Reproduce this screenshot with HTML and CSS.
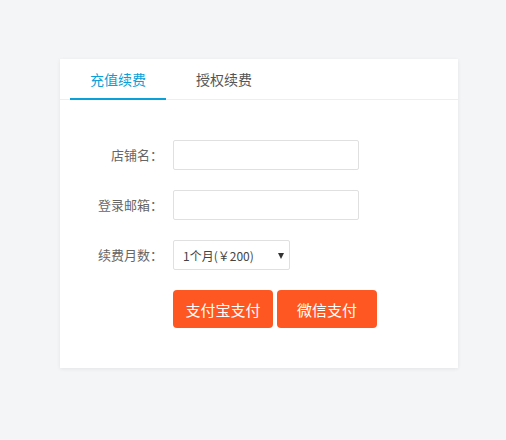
FILE: index.html
```html
<!DOCTYPE html>
<html lang="zh-CN">

<head>
    <meta charset="UTF-8">
    <meta name="viewport" content="width=device-width, initial-scale=1.0">
    <title>续费</title>
    <link rel="stylesheet" href="styles.css">
</head>

<body>
    <div class="card">
        <ul class="tabs">
            <li class="tab active">充值续费</li>
            <li class="tab">授权续费</li>
        </ul>
        <form class="form">
            <div class="row">
                <label class="label">店铺名：</label>
                <input class="input" type="text">
            </div>
            <div class="row">
                <label class="label">登录邮箱：</label>
                <input class="input" type="text">
            </div>
            <div class="row">
                <label class="label">续费月数：</label>
                <div class="select-wrap">
                    <select class="select">
                        <option>1个月(￥200)</option>
                        <option>3个月(￥600)</option>
                        <option>12个月(￥2400)</option>
                    </select>
                </div>
            </div>
            <div class="row actions">
                <button type="button" class="btn">支付宝支付</button>
                <button type="button" class="btn">微信支付</button>
            </div>
        </form>
    </div>
</body>

</html>
```

FILE: styles.css
```css
body {
    margin: 0;
    padding: 59px 48px 40px 60px;
    background-color: #f4f5f7;
    font-family: "Noto Sans CJK SC", "Open Sans", sans-serif;
    color: #666;
}

.card {
    width: 398px;
    background-color: #fff;
    box-shadow: 0 1px 4px rgba(0, 0, 0, 0.07);
}

.tabs {
    display: flex;
    margin: 0;
    padding: 0 0 0 10px;
    list-style: none;
    height: 40px;
    border-bottom: 1px solid #eee;
}

.tab {
    padding: 0 20px;
    margin-right: 10px;
    line-height: 40px;
    font-size: 14px;
    color: #555;
    cursor: pointer;
    position: relative;
}

.tab.active {
    color: #0aa0d8;
}

.tab.active::after {
    content: "";
    position: absolute;
    left: 0;
    right: 0;
    bottom: -1px;
    height: 2px;
    background-color: #0aa0d8;
}

.form {
    padding: 40px 0 40px 23px;
}

.row {
    display: flex;
    margin-bottom: 20px;
}

.row:last-child {
    margin-bottom: 0;
}

.label {
    width: 80px;
    padding-right: 10px;
    text-align: right;
    line-height: 30px;
    font-size: 13px;
    color: #666;
}

.input {
    width: 186px;
    height: 30px;
    box-sizing: border-box;
    border: 1px solid #e0e0e0;
    border-radius: 2px;
    padding: 0 8px;
    font-size: 13px;
    outline: none;
}

.select-wrap {
    position: relative;
}

.select-wrap::after {
    content: "";
    position: absolute;
    right: 6px;
    top: 13px;
    border-left: 3.5px solid transparent;
    border-right: 3.5px solid transparent;
    border-top: 6px solid #333;
    pointer-events: none;
}

.select {
    appearance: none;
    -webkit-appearance: none;
    width: 117px;
    height: 30px;
    box-sizing: border-box;
    border: 1px solid #e0e0e0;
    border-radius: 2px;
    padding: 0 0 0 9px;
    background-color: #fff;
    font-family: "Noto Sans CJK SC", "Open Sans", sans-serif;
    font-size: 12px;
    color: #444;
    outline: none;
}

.actions {
    padding-left: 90px;
    gap: 4px;
}

.btn {
    width: 100px;
    height: 38px;
    border: none;
    border-radius: 4px;
    background-color: #ff5722;
    color: #fff;
    font-family: "Noto Sans CJK SC", "Open Sans", sans-serif;
    font-size: 15px;
    cursor: pointer;
}
```
